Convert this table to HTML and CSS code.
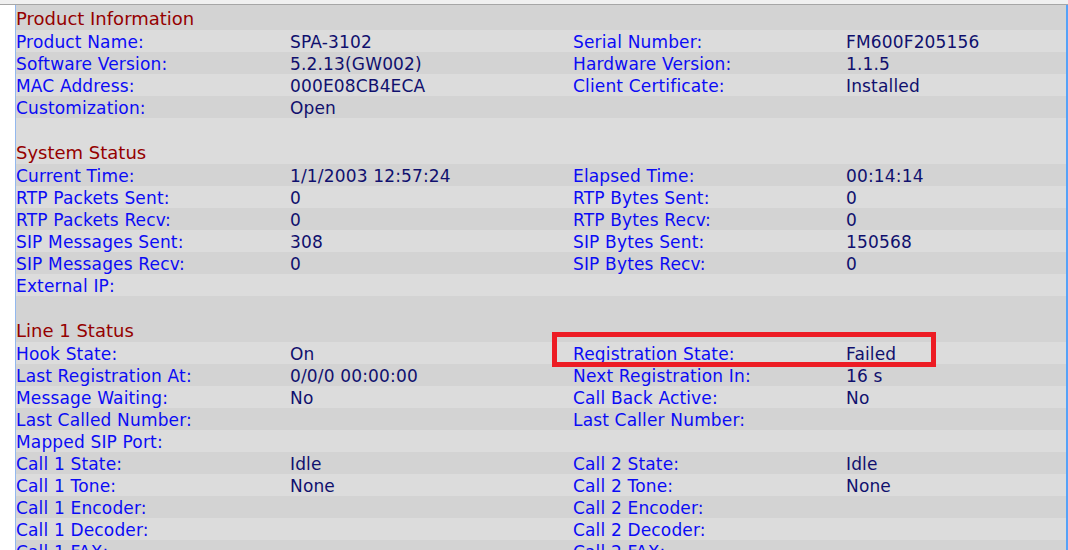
FILE: index.html
```html
<!DOCTYPE html>
<html>
<head>
<meta charset="utf-8">
<title>Status</title>
<link rel="stylesheet" href="styles.css">
</head>
<body>
<div class="topbar"></div>
<div class="frame">
  <div class="sheet">
    <div class="head first b"><span>Product Information</span></div>
    <div class="row a"><span class="k">Product Name:</span><span class="v">SPA-3102</span><span class="k">Serial Number:</span><span class="v">FM600F205156</span></div>
    <div class="row b"><span class="k">Software Version:</span><span class="v">5.2.13(GW002)</span><span class="k">Hardware Version:</span><span class="v">1.1.5</span></div>
    <div class="row a"><span class="k">MAC Address:</span><span class="v">000E08CB4ECA</span><span class="k">Client Certificate:</span><span class="v">Installed</span></div>
    <div class="row b"><span class="k">Customization:</span><span class="v">Open</span><span class="k"></span><span class="v"></span></div>

    <div class="head a"><span>System Status</span></div>
    <div class="row b"><span class="k">Current Time:</span><span class="v">1/1/2003 12:57:24</span><span class="k">Elapsed Time:</span><span class="v">00:14:14</span></div>
    <div class="row a"><span class="k">RTP Packets Sent:</span><span class="v">0</span><span class="k">RTP Bytes Sent:</span><span class="v">0</span></div>
    <div class="row b"><span class="k">RTP Packets Recv:</span><span class="v">0</span><span class="k">RTP Bytes Recv:</span><span class="v">0</span></div>
    <div class="row a"><span class="k">SIP Messages Sent:</span><span class="v">308</span><span class="k">SIP Bytes Sent:</span><span class="v">150568</span></div>
    <div class="row b"><span class="k">SIP Messages Recv:</span><span class="v">0</span><span class="k">SIP Bytes Recv:</span><span class="v">0</span></div>
    <div class="row a"><span class="k">External IP:</span><span class="v"></span><span class="k"></span><span class="v"></span></div>

    <div class="head b"><span>Line 1 Status</span></div>
    <div class="row a"><span class="k">Hook State:</span><span class="v">On</span><span class="k">Registration State:</span><span class="v">Failed</span></div>
    <div class="row b"><span class="k">Last Registration At:</span><span class="v">0/0/0 00:00:00</span><span class="k">Next Registration In:</span><span class="v">16 s</span></div>
    <div class="row a"><span class="k">Message Waiting:</span><span class="v">No</span><span class="k">Call Back Active:</span><span class="v">No</span></div>
    <div class="row b"><span class="k">Last Called Number:</span><span class="v"></span><span class="k">Last Caller Number:</span><span class="v"></span></div>
    <div class="row a"><span class="k">Mapped SIP Port:</span><span class="v"></span><span class="k"></span><span class="v"></span></div>
    <div class="row b"><span class="k">Call 1 State:</span><span class="v">Idle</span><span class="k">Call 2 State:</span><span class="v">Idle</span></div>
    <div class="row a"><span class="k">Call 1 Tone:</span><span class="v">None</span><span class="k">Call 2 Tone:</span><span class="v">None</span></div>
    <div class="row b"><span class="k">Call 1 Encoder:</span><span class="v"></span><span class="k">Call 2 Encoder:</span><span class="v"></span></div>
    <div class="row a"><span class="k">Call 1 Decoder:</span><span class="v"></span><span class="k">Call 2 Decoder:</span><span class="v"></span></div>
    <div class="row b"><span class="k">Call 1 FAX:</span><span class="v"></span><span class="k">Call 2 FAX:</span><span class="v"></span></div>
  </div>
  <div class="highlight"></div>
</div>
</body>
</html>
```

FILE: styles.css
```css
html, body {
  margin: 0;
  padding: 0;
  background: #ffffff;
  height: 550px;
  overflow: hidden;
}
body {
  font-family: "DejaVu Sans", Verdana, sans-serif;
  font-size: 17px;
  letter-spacing: 0.16px;
}
.topbar {
  height: 4px;
  background: #f0f0f0;
  border-bottom: 1px solid #a6a6a6;
}
.frame {
  position: relative;
  margin-left: 15px;
  width: 1050px;
  border-left: 1px solid #93b8ee;
  border-right: 2px solid #55a2f7;
}
.sheet {
  display: flex;
  flex-direction: column;
}
.a { background: #dcdcdc; }
.b { background: #d3d3d3; }
.row {
  display: grid;
  grid-template-columns: 274px 283px 273px 1fr;
  height: 22px;
  box-sizing: border-box;
  padding-top: 2px;
  line-height: 20px;
  white-space: nowrap;
}
.k { color: #0b0bf5; }
.v { color: #10106e; }
.head {
  height: 46px;
  box-sizing: border-box;
  padding-top: 25px;
  line-height: 20px;
  font-size: 18px;
  letter-spacing: 0;
  color: #950000;
}
.head.first {
  height: 25px;
  padding-top: 4px;
}
.highlight {
  position: absolute;
  left: 536px;
  top: 327px;
  width: 374px;
  height: 25px;
  border: 5px solid #ed1c24;
}
```
